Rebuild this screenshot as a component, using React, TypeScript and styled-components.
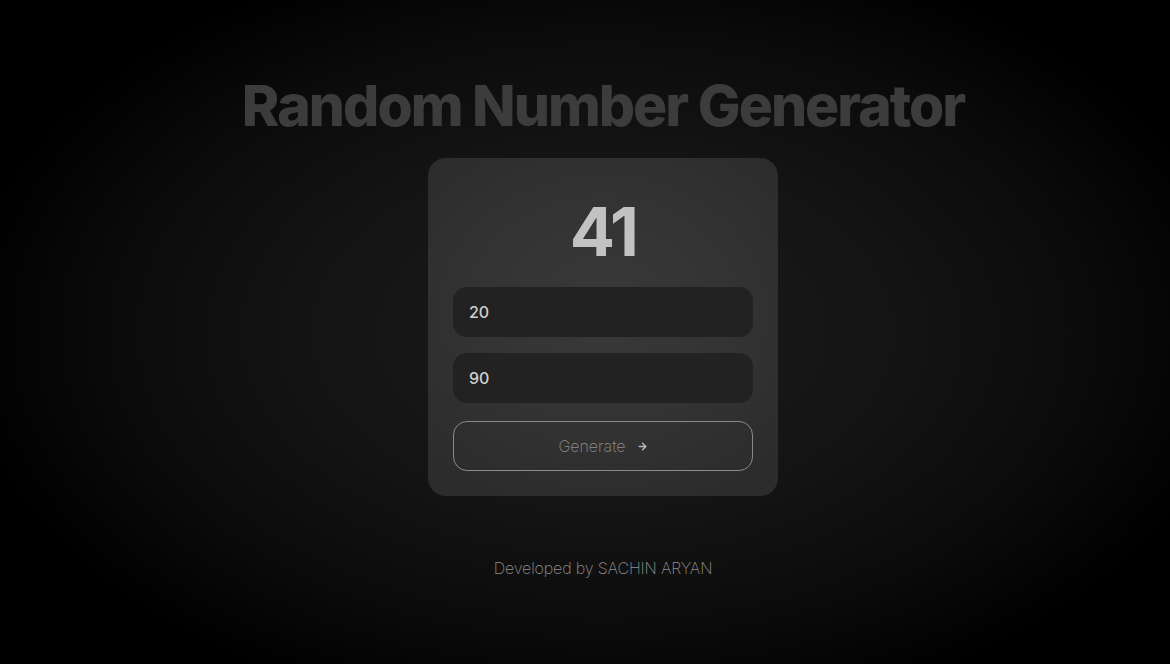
import React, { useState } from 'react';
import styled, { createGlobalStyle } from 'styled-components';

const GlobalStyle = createGlobalStyle`
    html, body {
        margin: 0;
        padding: 0;
        background: #000;
    }
    * {
        box-sizing: border-box;
    }
`;

const Page = styled.div`
    width: 100%;
    height: 664px;
    padding-left: 36px;
    display: flex;
    flex-direction: column;
    align-items: center;
    font-family: Inter, "Noto Sans", sans-serif;
    background: radial-gradient(ellipse 55% 60% at 51.5% 50%, #1b1b1b 0%, #141414 45%, #0b0b0b 75%, #000 100%);
    overflow: hidden;
`;

const Title = styled.h1`
    margin: 72px 0 0;
    font-size: 57px;
    font-weight: 800;
    line-height: 68px;
    letter-spacing: -0.035em;
    color: #3c3c3c;
`;

const Card = styled.div`
    margin-top: 18px;
    width: 350px;
    height: 338px;
    border-radius: 18px;
    padding: 34px 25px 25px;
    display: flex;
    flex-direction: column;
    align-items: center;
    background: radial-gradient(ellipse 70% 60% at 50% 45%, #393939 0%, #333 55%, #2c2c2c 100%);
`;

const Result = styled.div`
    font-size: 67px;
    font-weight: 700;
    line-height: 80px;
    letter-spacing: -0.04em;
    color: #c2c2c2;
    margin-bottom: 15px;
`;

const Field = styled.input`
    width: 300px;
    height: 50px;
    border: none;
    outline: none;
    border-radius: 14px;
    padding: 0 16px;
    margin-bottom: 16px;
    background: #222;
    color: #d0d0d0;
    font-family: inherit;
    font-size: 16px;
    font-weight: 500;
`;

const GenerateButton = styled.button`
    margin-top: 2px;
    width: 300px;
    height: 50px;
    border-radius: 14px;
    border: 1.5px solid #8a8a8a;
    background: transparent;
    color: #8e8e8e;
    font-family: inherit;
    font-size: 16px;
    font-weight: 200;
    display: flex;
    align-items: center;
    justify-content: center;
    gap: 11px;
    cursor: pointer;
`;

const Footer = styled.p`
    margin: 62px 0 0;
    font-size: 16px;
    font-weight: 200;
    letter-spacing: -0.01em;
    color: #909090;
`;

const Arrow = () => (
    <svg width="11" height="11" viewBox="0 0 24 24" fill="none" stroke="#bbb" strokeWidth="3" strokeLinecap="round" strokeLinejoin="round">
        <path d="M5 12h14" />
        <path d="M12 5l7 7-7 7" />
    </svg>
);

export default function App() {
    const [min, setMin] = useState('20');
    const [max, setMax] = useState('90');
    const [value, setValue] = useState(41);

    const generate = () => {
        const lo = Number(min);
        const hi = Number(max);
        if (isNaN(lo) || isNaN(hi) || hi < lo) return;
        setValue(Math.floor(Math.random() * (hi - lo + 1)) + lo);
    };

    return (
        <>
            <GlobalStyle />
            <Page>
                <Title>Random Number Generator</Title>
                <Card>
                    <Result>{value}</Result>
                    <Field value={min} onChange={(e) => setMin(e.target.value)} />
                    <Field value={max} onChange={(e) => setMax(e.target.value)} />
                    <GenerateButton onClick={generate}>
                        Generate <Arrow />
                    </GenerateButton>
                </Card>
                <Footer>Developed by SACHIN ARYAN</Footer>
            </Page>
        </>
    );
}
